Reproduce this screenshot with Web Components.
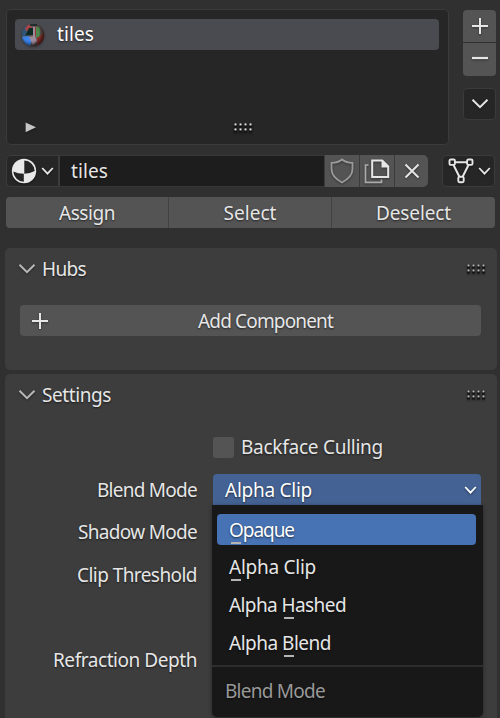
<!DOCTYPE html>
<html lang="en">
<head>
<meta charset="utf-8">
<title>Material properties</title>
<style>
html,body{margin:0;height:100%;background:#303030;overflow:hidden}
body{font:19px/24px "Noto Sans","Open Sans",sans-serif;color:#e6e6e6}
</style>
</head>
<body>
<material-editor></material-editor>
<script>
const define = (name, html, extra) => customElements.define(name, class extends HTMLElement {
  connectedCallback() {
    if (this.shadowRoot) return;
    const t = document.createElement('template');
    t.innerHTML = html;
    this.attachShadow({mode: 'open'}).append(t.content.cloneNode(true));
    if (extra) extra.call(this, this.shadowRoot);
  }
});

/* Single-line text; "w" is its advance width in pixels, "key" the index of its shortcut letter. */
define('ui-text', `<style>
:host{display:block;white-space:pre;flex:none;text-shadow:0 1px 2px #0009}
.k{position:relative}
.k::after{content:"";position:absolute;left:2px;width:10px;bottom:-1px;height:2px;background:#b5b5b5}
</style><span id="s"></span>`, function (root) {
  const s = root.getElementById('s'), txt = this.getAttribute('text'), w = +this.getAttribute('w');
  if (this.hasAttribute('key')) {
    const i = +this.getAttribute('key'), k = document.createElement('span');
    k.className = 'k'; k.textContent = txt[i];
    s.append(txt.slice(0, i), k, txt.slice(i + 1));
  } else s.textContent = txt;
  if (w) {
    s.style.letterSpacing = (w - s.getBoundingClientRect().width) / txt.length + 'px';
    this.style.width = w + 'px';
  }
});

const icons = {
  plus: [20, 20, '<path d="M10 2v16M2 10h16" stroke-width="2"/>'],
  minus: [20, 20, '<path d="M2 10h16" stroke-width="2.2"/>'],
  chevron: [18, 12, '<path d="M1.5 1.8 9 9.2 16.5 1.8" stroke-width="2"/>'],
  small: [13, 10, '<path d="M1.2 2 6.5 7.6 11.8 2" stroke-width="1.8"/>'],
  close: [16, 16, '<path d="M1.5 1.5 14.5 14.5M14.5 1.5 1.5 14.5" stroke-width="1.9"/>'],
  play: [12, 11, '<path d="M.6.4 11 5.3.6 10.2Z" fill="currentColor" stroke="none"/>'],
  grip: [19, 10, [0,1,2,3].map(i => [0,1].map(j => `<path fill="#151515" stroke="none" d="M${i*5} ${j*5}h3v4.500h-3z"/><path fill="currentColor" stroke="none" d="M${i*5+.5} ${j*5+.4}h2v2h-2z"/>`).join('')).join('')],
  shield: [24, 26, '<path d="M12 1.5C9 4 5.500 4.8 1.5 4.8V11c0 6 4 10 10.500 13.500C18.500 21 22.500 17 22.500 11V4.800C18.500 4.800 15 4 12 1.500Z" stroke-width="1.8"/>'],
  copy: [26, 25, '<path d="M4.500 6H1.500v17.300h16V20.500" stroke="#aaa" stroke-width="1.7"/><path d="M8.200 1.500h10l6 6v10.500h-16Z" stroke-width="2"/><path d="M17.500 1v7.500H25Z" fill="currentColor" stroke="none"/>'],
  mesh: [26, 26, '<path d="M7 4.2H19M5.5 7 11.5 19M20.5 7 14.5 19" stroke-width="2"/><g stroke-width="1.9"><rect x="1.5" y="1.5" width="5.4" height="5.4" rx="1.2"/><rect x="19.1" y="1.5" width="5.4" height="5.4" rx="1.2"/><rect x="10.3" y="18.8" width="5.4" height="5.4" rx="1.2"/></g>'],
  material: [26, 26, '<circle cx="13" cy="13" r="12.2" fill="#e9e9e9" stroke="none"/><path d="M13.3 2.500A10.700 10.700 0 0 1 23.700 13Q18.500 15.800 13.300 15.800Z M2.300 13.500Q7 15.800 12.800 15.800V23.700A10.700 10.700 0 0 1 2.300 13.500Z" fill="#252525" stroke="none"/>'],
  preview: [24, 24, `<defs><clipPath id="c"><circle cx="12" cy="12" r="11.2"/></clipPath><radialGradient id="g" cx=".4" cy=".42" r=".62"><stop offset=".55" stop-opacity="0"/><stop offset="1" stop-opacity=".75"/></radialGradient><filter id="b"><feGaussianBlur stdDeviation=".45"/></filter></defs>
    <g clip-path="url(#c)" stroke="none"><g filter="url(#b)"><path fill="#675753" d="M0 0h24v24H0z"/><path fill="#315475" d="M0 0h6v13H0z"/><path fill="#3b84ea" d="M0 14 8 13l3 4-2 7H0Z"/><path fill="#a34549" d="M4 5 8 1l3 2-2 4-4 1Z"/><path fill="#092920" d="M4.500 12.500 8 5h4v7Z"/><path fill="#9d8a9d" d="M12 4h2v10h-2zM8 14l6-1 2 5-4 4Z"/><path fill="#4d8950" d="M15 4h4v10h-4z"/><path fill="#9b3931" d="M14 4h1v9h-1zM16 15l7-5v10l-7 2Z"/><path fill="#203033" d="M9 1h7v2H9z"/></g><circle cx="12" cy="12" r="12" fill="url(#g)"/></g>`]
};
define('ui-icon', `<style>:host{display:block;flex:none;filter:drop-shadow(0 1px 1px #0006)}svg{display:block;overflow:visible}</style>`, function (root) {
  const [w, h, body] = icons[this.getAttribute('name')];
  const t = document.createElement('template');
  t.innerHTML = `<svg width="${w}" height="${h}" viewBox="0 0 ${w} ${h}" fill="none" stroke="currentColor">${body}</svg>`;
  root.append(t.content);
});

define('ui-button', `<style>
:host{display:flex;align-items:center;justify-content:center;box-sizing:border-box;height:31px;background:#545454;border-radius:var(--r,4px)}
:host([dark]){background:#262626;border:1px solid #3b3b3b}
</style><slot></slot>`);

define('slot-list', `<style>
:host{display:flex;flex-direction:column;justify-content:space-between;box-sizing:border-box;width:443px;height:136px;padding:9px 9px 11px 8px;background:#262626;border:1px solid #3b3b3b;border-radius:5px}
.row{display:flex;align-items:center;gap:12px;height:31px;width:424px;padding-left:6px;box-sizing:border-box;background:#4a4b50;border-radius:4px;color:#fff}
.row ui-text{margin-top:-2px}
.foot{display:flex;align-items:center;padding-left:10px;gap:197px}
.foot ui-icon:first-child{color:#c5c5c5}
</style>
<div class="row"><ui-icon name="preview"></ui-icon><ui-text text="tiles" w="37"></ui-text></div>
<div class="foot"><ui-icon name="play"></ui-icon><ui-icon name="grip"></ui-icon></div>`);

define('id-row', `<style>
:host{display:flex;justify-content:space-between;height:32px}
.id{display:flex;gap:1px;width:422px;background:#3b3b3b;border-radius:5px}
.id ui-button{height:32px;--r:0}
.id .m{--r:5px 0 0 5px;width:53px;gap:4px}
.f{flex:1;display:flex;align-items:center;background:#1d1d1d;padding-left:11px;border-block:1px solid #373737}
.mesh{width:53px;height:32px;gap:4px;padding-left:2px}
</style>
<div class="id"><ui-button dark class="m"><ui-icon name="material"></ui-icon><ui-icon name="small"></ui-icon></ui-button>
<div class="f"><ui-text text="tiles" w="37"></ui-text></div>
<ui-button style="width:34px;color:#9a9a9a"><ui-icon name="shield"></ui-icon></ui-button>
<ui-button style="width:34px"><ui-icon name="copy"></ui-icon></ui-button>
<ui-button style="width:33px;--r:0 5px 5px 0"><ui-icon name="close"></ui-icon></ui-button></div>
<ui-button dark class="mesh"><ui-icon name="mesh"></ui-icon><ui-icon name="small"></ui-icon></ui-button>`);

define('ui-panel', `<style>
:host{display:block;box-sizing:border-box;background:#3d3d3d;border-radius:5px}
header{display:flex;align-items:center;height:42px;padding:0 11px 0 13px}
header ui-icon:first-child{color:#b8b8b8;margin-right:6px}
.g{margin-left:auto;color:#bbb}
</style><header><ui-icon name="chevron"></ui-icon><ui-text id="t"></ui-text><ui-icon class="g" name="grip"></ui-icon></header><slot></slot>`, function (root) {
  const h = root.getElementById('t'), n = document.createElement('ui-text');
  n.setAttribute('text', this.getAttribute('heading'));
  n.setAttribute('w', this.getAttribute('w'));
  h.replaceWith(n);
});

define('blend-select', `<style>
:host{display:block;position:relative;width:268px}
.field{display:flex;align-items:center;justify-content:space-between;height:31px;padding:0 4px 0 12px;box-sizing:border-box;background:#446293;border-radius:4px 4px 0 0;color:#fff}
.menu{position:absolute;left:-1px;top:31px;width:271px;height:212px;box-sizing:border-box;padding-top:9px;background:#181818;border-radius:0 0 5px 5px;box-shadow:0 1px 4px #0006}
.item{display:flex;align-items:center;height:31px;margin:0 7px 6.600px 5px;padding-left:12px;border-radius:4px}
.on{background:#4772b3;color:#fff}
.foot{display:flex;align-items:center;height:48px;margin-top:2px;padding-left:13px;border-top:2px solid #2d2d2d;color:#999}
</style>
<div class="field"><ui-text text="Alpha Clip" w="87"></ui-text><ui-icon name="small"></ui-icon></div>
<div class="menu">
<div class="item on"><ui-text text="Opaque" w="65" key="0"></ui-text></div>
<div class="item"><ui-text text="Alpha Clip" w="87" key="0"></ui-text></div>
<div class="item"><ui-text text="Alpha Hashed" w="117" key="6"></ui-text></div>
<div class="item"><ui-text text="Alpha Blend" w="102" key="6"></ui-text></div>
<div class="foot"><ui-text text="Blend Mode" w="100"></ui-text></div>
</div>`);

define('material-editor', `<style>
:host{display:flex;flex-direction:column;box-sizing:border-box;width:500px;height:718px;padding:9px 3px 0 5px;overflow:hidden}
.top{display:flex;justify-content:space-between;padding-left:1px;width:491px;box-sizing:border-box}
.side{display:flex;flex-direction:column;width:33px;padding-top:1px}
.side ui-button{height:32px}
.row{width:489px;box-sizing:border-box;margin:10px 0 0 1px}
.acts{display:grid;grid-template-columns:162px 162px 163px;gap:1px;background:#424242;border-radius:4px}
.hubs{height:122px;flex:none;margin-top:20px}
.add{margin:15px 16px 0 15px;justify-content:flex-start;padding-left:10px}
.set{height:350px;flex:none;margin-top:4px}
.grid{display:grid;grid-template-columns:192px 268px;column-gap:16px;grid-template-rows:42.500px 42.500px 42.500px 42.500px 43px 42px;margin-top:10px;align-items:center}
.l{justify-self:end}
.check{display:flex;align-items:center;gap:7px}
.box{width:21px;height:21px;border-radius:3px;background:#545454}
</style>
<div class="top"><slot-list></slot-list><div class="side">
<ui-button style="--r:4px 4px 0 0"><ui-icon name="plus"></ui-icon></ui-button>
<ui-button style="--r:0 0 4px 4px;margin-top:1px;height:33px;padding-bottom:4px"><ui-icon name="minus"></ui-icon></ui-button>
<ui-button dark style="margin-top:12px"><ui-icon name="chevron"></ui-icon></ui-button></div></div>
<id-row class="row"></id-row>
<div class="row acts"><ui-button style="--r:4px 0 0 4px"><ui-text text="Assign" w="56"></ui-text></ui-button><ui-button style="--r:0"><ui-text text="Select" w="53"></ui-text></ui-button><ui-button style="--r:0 4px 4px 0"><ui-text text="Deselect" w="75"></ui-text></ui-button></div>
<ui-panel class="hubs" heading="Hubs" w="44"><ui-button class="add"><ui-icon name="plus"></ui-icon><ui-text style="margin-left:148px" text="Add Component" w="135"></ui-text></ui-button></ui-panel>
<ui-panel class="set" heading="Settings" w="69"><div class="grid">
<span></span><div class="check"><div class="box"></div><ui-text text="Backface Culling" w="142"></ui-text></div>
<ui-text class="l" text="Blend Mode" w="100"></ui-text><blend-select></blend-select>
<ui-text class="l" text="Shadow Mode" w="119"></ui-text><span></span>
<ui-text class="l" text="Clip Threshold" w="120"></ui-text><span></span>
<span></span><span></span>
<ui-text class="l" text="Refraction Depth" w="144"></ui-text><span></span>
</div></ui-panel>`);
</script>
</body>
</html>
